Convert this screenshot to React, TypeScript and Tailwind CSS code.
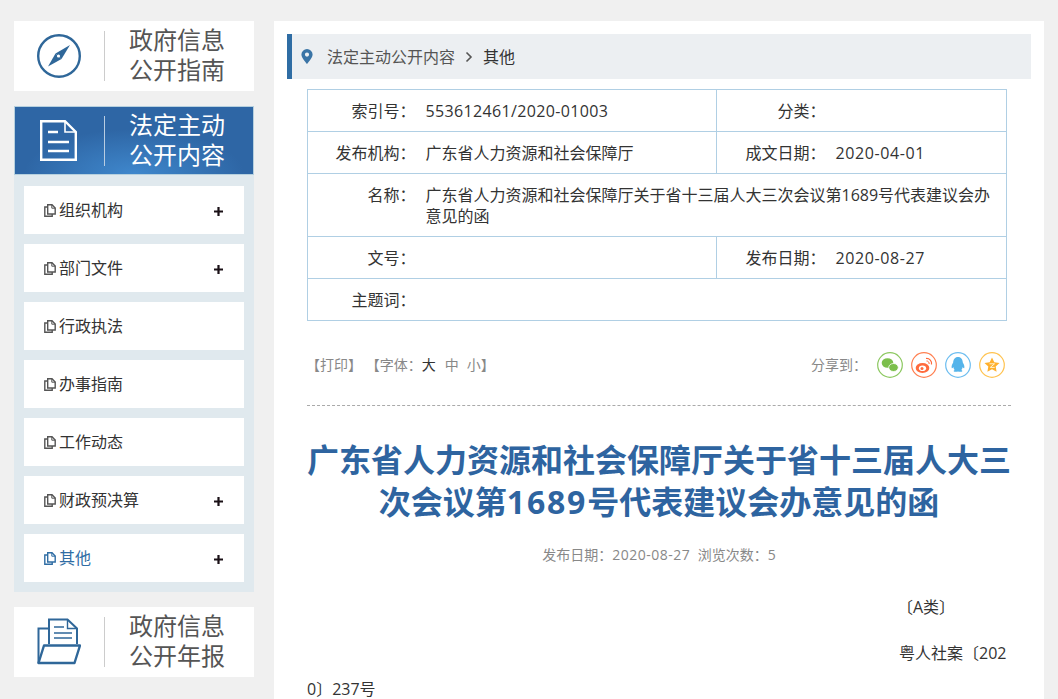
import React from "react";

const font = { fontFamily: '"Open Sans","Noto Sans CJK SC",sans-serif' };

function DocSmall({ color = "#555" }: { color?: string }) {
  return (
    <svg width="12" height="13" viewBox="0 0 12 13" fill="none" stroke={color} strokeWidth="1.4" className="shrink-0">
      <path d="M3.7 .8h4.3l3.2 3.2v6H3.7z" />
      <path d="M7.800 .8v3.400h3.400" strokeWidth="1" />
      <path d="M3.700 3H.8v9.200h7.400V10" />
    </svg>
  );
}

function Compass() {
  return (
    <svg width="44" height="44" viewBox="0 0 44 44">
      <circle cx="22" cy="22" r="20.800" fill="none" stroke="#2f6799" strokeWidth="2.400" />
      <path d="M33 11 L24.500 25 L18.500 19.500 Z" fill="#2f6799" />
      <path d="M11 32.500 L18.500 19.500 L24.500 25 Z" fill="#2f6799" />
      <circle cx="21.500" cy="22" r="1.600" fill="#fff" />
    </svg>
  );
}

function DocLarge() {
  return (
    <svg width="37" height="41" viewBox="0 0 37 41" fill="none" stroke="#fff" strokeWidth="2.400">
      <path d="M1.200 1.200H25L35.800 12V39.800H1.200Z" />
      <path d="M25 1.200V12H35.800" strokeWidth="1.600" />
      <path d="M8 12h10M8 22h21M8 31h21" strokeWidth="2.600" />
    </svg>
  );
}

function Folder() {
  return (
    <svg width="44" height="48" viewBox="0 0 44 48" fill="none" stroke="#2f6799" strokeWidth="2">
      <path d="M12 10.500H1.500V45" />
      <path d="M12 26V1.500H30.500L40 10.500V26" />
      <path d="M30.500 1.500V10.500H40" strokeWidth="1.400" />
      <path d="M17 9h10M17 15h18M17 20h18" strokeWidth="1.600" />
      <path d="M7 27.500H43L37.500 45H1.500Z" strokeWidth="2.400" strokeLinejoin="round" />
    </svg>
  );
}

function Tile({ icon, lines }: { icon: React.ReactNode; lines: string[] }) {
  return (
    <div className="flex h-[70px] items-center bg-white">
      <div className="flex w-[90px] justify-center">{icon}</div>
      <div className="h-[50px] w-px bg-[#cccccc]" />
      <div className="-mt-[2px] ml-[24px] text-[24px] leading-[30px] text-[#555555]">
        <div>{lines[0]}</div>
        <div>{lines[1]}</div>
      </div>
    </div>
  );
}

function MenuItem({ label, plus, active }: { label: string; plus?: boolean; active?: boolean }) {
  return (
    <div className="flex h-[48px] items-center justify-between bg-white pl-[20px] pr-[21px]">
      <div className={`flex items-center gap-[3px] text-[16px] ${active ? "text-[#2f6da4]" : "text-[#333333]"}`}>
        <DocSmall color={active ? "#2f6da4" : "#555555"} />
        <span>{label}</span>
      </div>
      {plus && (
        <svg className="mt-[2px]" width="9" height="9" viewBox="0 0 9 9" stroke="#1a1016" strokeWidth="2.200">
          <path d="M0 4.500h9M4.500 0v9" />
        </svg>
      )}
    </div>
  );
}

function Share({ color, children }: { color: string; children: React.ReactNode }) {
  return (
    <svg width="26" height="26" viewBox="0 0 26 26">
      <circle cx="13" cy="13" r="12.300" fill="none" stroke={color} strokeWidth="1.200" />
      {children}
    </svg>
  );
}

const labelCell = "border-y border-[#b0cfe4] text-right align-top pt-[11px] pb-[9px] leading-[21px]";
const valueCell = "border-y border-[#b0cfe4] align-top pl-[10px] pr-[14px] pt-[11px] pb-[9px] leading-[21px]";
const num = "tracking-[0.6px]";

export default function App() {
  return (
    <div className="flex h-[699px] gap-[20px] overflow-hidden bg-[#f0f0f0] pl-[14px] pt-[21px] text-[#333333]" style={font}>
      <aside className="w-[240px] shrink-0">
        <Tile icon={<Compass />} lines={["政府信息", "公开指南"]} />
        <div className="mt-[15px] flex h-[69px] items-center border border-[#b6d0de] bg-[radial-gradient(ellipse_110px_45px_at_50%_100%,#3f87cc,#2e66a5)]">
          <div className="flex w-[87px] justify-center"><DocLarge /></div>
          <div className="ml-[2px] h-[50px] w-px bg-[#b9cde2]" />
          <div className="-mt-[2px] ml-[24px] text-[24px] leading-[30px] text-white">
            <div>法定主动</div>
            <div>公开内容</div>
          </div>
        </div>
        <div className="flex flex-col gap-[10px] bg-[#e0e9ee] p-[10px] pt-[11px]">
          <MenuItem label="组织机构" plus />
          <MenuItem label="部门文件" plus />
          <MenuItem label="行政执法" />
          <MenuItem label="办事指南" />
          <MenuItem label="工作动态" />
          <MenuItem label="财政预决算" plus />
          <MenuItem label="其他" plus active />
        </div>
        <div className="mt-[15px]">
          <Tile icon={<Folder />} lines={["政府信息", "公开年报"]} />
        </div>
      </aside>

      <main className="h-[700px] w-[770px] bg-white pl-[13px] pt-[13px]">
        <div className="flex h-[45px] w-[744px] items-center border-l-[5px] border-[#2f6da4] bg-[#eceff2] pl-[9px] text-[16px]">
          <svg width="12" height="15" viewBox="0 0 12 15" fill="#3a74a6">
            <path fillRule="evenodd" d="M6 0a5.600 5.600 0 0 1 5.600 5.600C11.600 9 6 15 6 15S.4 9 .4 5.600A5.600 5.600 0 0 1 6 0zm0 3.500a2.100 2.100 0 1 0 0 4.200 2.100 2.100 0 0 0 0-4.200z" />
          </svg>
          <span className="ml-[14px] text-[#555555]">法定主动公开内容</span>
          <svg className="mx-[10px]" width="8" height="12" viewBox="0 0 8 12" fill="none" stroke="#555" strokeWidth="1.600">
            <path d="M1.500 1.500 6 6l-4.500 4.500" />
          </svg>
          <span className="text-[#333333]">其他</span>
        </div>

        <div className="ml-[20px] w-[704px]">
          <table className="mt-[10px] w-[700px] table-fixed border-collapse border border-[#b0cfe4] text-[16px]">
            <colgroup>
              <col className="w-[108px]" />
              <col className="w-[301px]" />
              <col className="w-[109px]" />
              <col />
            </colgroup>
            <tbody>
              <tr className="h-[42px]">
                <td className={labelCell}>索引号：</td>
                <td className={`${valueCell} border-r tracking-[0.35px]`}>553612461/2020-01003</td>
                <td className={labelCell}>分类：</td>
                <td className={valueCell}></td>
              </tr>
              <tr className="h-[42px]">
                <td className={labelCell}>发布机构：</td>
                <td className={`${valueCell} border-r`}>广东省人力资源和社会保障厅</td>
                <td className={labelCell}>成文日期：</td>
                <td className={`${valueCell} ${num}`}>2020-04-01</td>
              </tr>
              <tr className="h-[63px]">
                <td className={labelCell}>名称：</td>
                <td className={valueCell} colSpan={3}>广东省人力资源和社会保障厅关于省十三届人大三次会议第1689号代表建议会办意见的函</td>
              </tr>
              <tr className="h-[42px]">
                <td className={labelCell}>文号：</td>
                <td className={`${valueCell} border-r`}></td>
                <td className={labelCell}>发布日期：</td>
                <td className={`${valueCell} ${num}`}>2020-08-27</td>
              </tr>
              <tr className="h-[42px]">
                <td className={labelCell}>主题词：</td>
                <td className={valueCell} colSpan={3}></td>
              </tr>
            </tbody>
          </table>

          <div className="flex h-[85px] items-center justify-between border-b border-dashed border-[#aaaaaa] pr-[6px] pt-[3px]">
            <div className="-ml-[1px] text-[14px] text-[#888888]">
              【打印】 【字体：<span className="text-[#333333]">大</span>
              <span className="ml-[9px]">中</span>
              <span className="ml-[8px]">小】</span>
            </div>
            <div className="flex items-center gap-[8px] text-[14px] text-[#888888]">
              <span className="mr-[2px]">分享到：</span>
              <Share color="#8cc860">
                <ellipse cx="10.500" cy="11" rx="5.800" ry="4.800" fill="#7cbf4c" />
                <ellipse cx="16.500" cy="15.500" rx="4.800" ry="4" fill="#7cbf4c" stroke="#fff" strokeWidth=".8" />
              </Share>
              <Share color="#ff7f50">
                <ellipse cx="11.500" cy="16" rx="6.800" ry="5" fill="#ff6a3c" />
                <ellipse cx="11.500" cy="16.300" rx="3.600" ry="2.800" fill="#fff" />
                <circle cx="11" cy="16.500" r="1.500" fill="#ff6a3c" />
                <path d="M15 6.500a5 5 0 0 1 5.500 6" fill="none" stroke="#ff6a3c" strokeWidth="1.200" />
                <path d="M15.500 9a2.500 2.500 0 0 1 2.600 3" fill="none" stroke="#ff6a3c" strokeWidth="1" />
              </Share>
              <Share color="#6cbdf0">
                <path d="M13 5c3.200 0 4.700 2.600 4.800 5.600.9 1.500 2 3.600 1.500 5.400-.5.600-1.300-.3-1.800-1 0 1.200-.5 2.300-1.300 3 .8.300 1.300.8 1.100 1.300-.4.700-3.500.7-4.300.1-.8.600-3.900.6-4.300-.1-.2-.5.300-1 1.100-1.300-.8-.7-1.300-1.800-1.300-3-.5.7-1.300 1.600-1.800 1-.5-1.800.6-3.900 1.500-5.400C8.300 7.600 9.800 5 13 5z" fill="#55b4ea" />
              </Share>
              <Share color="#ffc350">
                <path d="M13 5.500l2.300 4.800 5.200.7-3.800 3.600.9 5.200-4.600-2.500-4.600 2.500.9-5.200-3.800-3.600 5.200-.7z" fill="#ffb02e" />
                <path d="M10.500 11.800h5l-4.200 3.600h4.400" fill="none" stroke="#fff3d0" strokeWidth="1" />
              </Share>
            </div>
          </div>

          <h1 className="mt-[33px] text-center text-[32px] font-bold leading-[42px] text-[#2e64a0]">
            广东省人力资源和社会保障厅关于省十三届人大三次会议第<span className="tracking-[1.8px]">1689</span>号代表建议会办意见的函
          </h1>

          <div className="mt-[22px] text-center text-[14px] leading-[20px] text-[#888888]">
            发布日期：<span className="tracking-[0.5px]">2020-08-27</span>&nbsp;&nbsp;浏览次数：5
          </div>

          <div className="mt-[24px] w-[700px] text-[16px] text-[#333333]">
            <p className="pl-[590px] leading-[36px]">〔A类〕</p>
            <p className="mt-[10px] break-all indent-[592px] leading-[36px]">粤人社案〔2020〕237号</p>
          </div>
        </div>
      </main>
    </div>
  );
}
